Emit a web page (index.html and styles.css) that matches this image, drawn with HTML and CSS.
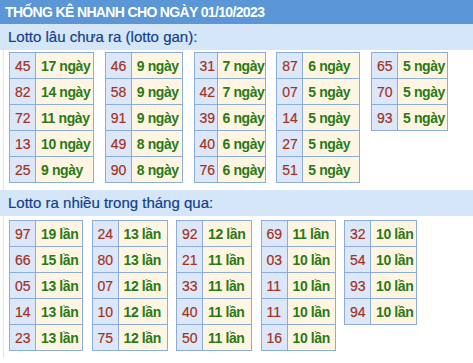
FILE: index.html
```html
<!DOCTYPE html>
<html lang="vi">
<head>
<meta charset="utf-8">
<title>Thống kê nhanh</title>
<link rel="stylesheet" href="styles.css">
</head>
<body>
<div class="page">
  <div class="title">THỐNG KÊ NHANH CHO NGÀY 01/10/2023</div>
  <div class="sub">Lotto lâu chưa ra (lotto gan):</div>
  <div class="box">
    <div class="group g1">
      <table class="lt"><tr><td class="n">45</td><td class="v">17 ngày</td></tr><tr><td class="n">82</td><td class="v">14 ngày</td></tr><tr><td class="n">72</td><td class="v">11 ngày</td></tr><tr><td class="n">13</td><td class="v">10 ngày</td></tr><tr><td class="n">25</td><td class="v">9 ngày</td></tr></table>
      <table class="lt"><tr><td class="n">46</td><td class="v">9 ngày</td></tr><tr><td class="n">58</td><td class="v">9 ngày</td></tr><tr><td class="n">91</td><td class="v">9 ngày</td></tr><tr><td class="n">49</td><td class="v">8 ngày</td></tr><tr><td class="n">90</td><td class="v">8 ngày</td></tr></table>
      <table class="lt"><tr><td class="n">31</td><td class="v">7 ngày</td></tr><tr><td class="n">42</td><td class="v">7 ngày</td></tr><tr><td class="n">39</td><td class="v">6 ngày</td></tr><tr><td class="n">40</td><td class="v">6 ngày</td></tr><tr><td class="n">76</td><td class="v">6 ngày</td></tr></table>
      <table class="lt"><tr><td class="n">87</td><td class="v">6 ngày</td></tr><tr><td class="n">07</td><td class="v">5 ngày</td></tr><tr><td class="n">14</td><td class="v">5 ngày</td></tr><tr><td class="n">27</td><td class="v">5 ngày</td></tr><tr><td class="n">51</td><td class="v">5 ngày</td></tr></table>
      <table class="lt"><tr><td class="n">65</td><td class="v">5 ngày</td></tr><tr><td class="n">70</td><td class="v">5 ngày</td></tr><tr><td class="n">93</td><td class="v">5 ngày</td></tr></table>
    </div>
  </div>
  <div class="sub">Lotto ra nhiều trong tháng qua:</div>
  <div class="box">
    <div class="group g2">
      <table class="lt"><tr><td class="n">97</td><td class="v">19 lần</td></tr><tr><td class="n">66</td><td class="v">15 lần</td></tr><tr><td class="n">05</td><td class="v">13 lần</td></tr><tr><td class="n">14</td><td class="v">13 lần</td></tr><tr><td class="n">23</td><td class="v">13 lần</td></tr></table>
      <table class="lt"><tr><td class="n">24</td><td class="v">13 lần</td></tr><tr><td class="n">80</td><td class="v">13 lần</td></tr><tr><td class="n">07</td><td class="v">12 lần</td></tr><tr><td class="n">10</td><td class="v">12 lần</td></tr><tr><td class="n">75</td><td class="v">12 lần</td></tr></table>
      <table class="lt"><tr><td class="n">92</td><td class="v">12 lần</td></tr><tr><td class="n">21</td><td class="v">11 lần</td></tr><tr><td class="n">33</td><td class="v">11 lần</td></tr><tr><td class="n">40</td><td class="v">11 lần</td></tr><tr><td class="n">50</td><td class="v">11 lần</td></tr></table>
      <table class="lt"><tr><td class="n">69</td><td class="v">11 lần</td></tr><tr><td class="n">03</td><td class="v">10 lần</td></tr><tr><td class="n">11</td><td class="v">10 lần</td></tr><tr><td class="n">11</td><td class="v">10 lần</td></tr><tr><td class="n">16</td><td class="v">10 lần</td></tr></table>
      <table class="lt"><tr><td class="n">32</td><td class="v">10 lần</td></tr><tr><td class="n">54</td><td class="v">10 lần</td></tr><tr><td class="n">93</td><td class="v">10 lần</td></tr><tr><td class="n">94</td><td class="v">10 lần</td></tr></table>
    </div>
  </div>
</div>
</body>
</html>
```
FILE: styles.css
```css
html, body {
  margin: 0;
  padding: 0;
  background: #ffffff;
}
body {
  font-family: "Liberation Sans", Arial, sans-serif;
}
.page {
  width: 473px;
}
.title {
  height: 24px;
  line-height: 25px;
  background: #5b96d6;
  color: #ffffff;
  font-weight: bold;
  font-size: 14px;
  padding-left: 5px;
  letter-spacing: -0.65px;
}
.sub {
  height: 26px;
  line-height: 26px;
  background: #d5e6f9;
  color: #123f8b;
  font-size: 15px;
  padding-left: 8px;
  -webkit-text-stroke: 0.2px #123f8b;
}
.box {
  margin-left: 3px;
  border-left: 1px solid #dfe4ee;
  padding-left: 5px;
}
.group {
  display: grid;
  align-items: start;
}
.g1 {
  grid-template-columns: 85px 78px 72px 84px 77px;
  column-gap: 10.75px;
  padding-top: 2px;
  padding-bottom: 7px;
}
.g2 {
  grid-template-columns: 74px 76px 76px 75px 73px;
  column-gap: 8.5px;
  padding-top: 4px;
  padding-bottom: 6px;
}
.lt {
  border-collapse: collapse;
  width: 100%;
}
.lt td {
  border: 1px solid #8cacdc;
  height: 25px;
  padding: 0 0 0 5px;
  font-size: 14px;
  white-space: nowrap;
}
.lt .n {
  width: 20px;
  background: #dce8fa;
  color: #a1321e;
  -webkit-text-stroke: 0.2px #a1321e;
}
.lt .v {
  background: #fff5e3;
  color: #2a7a16;
  font-weight: bold;
  letter-spacing: -0.4px;
}
```
